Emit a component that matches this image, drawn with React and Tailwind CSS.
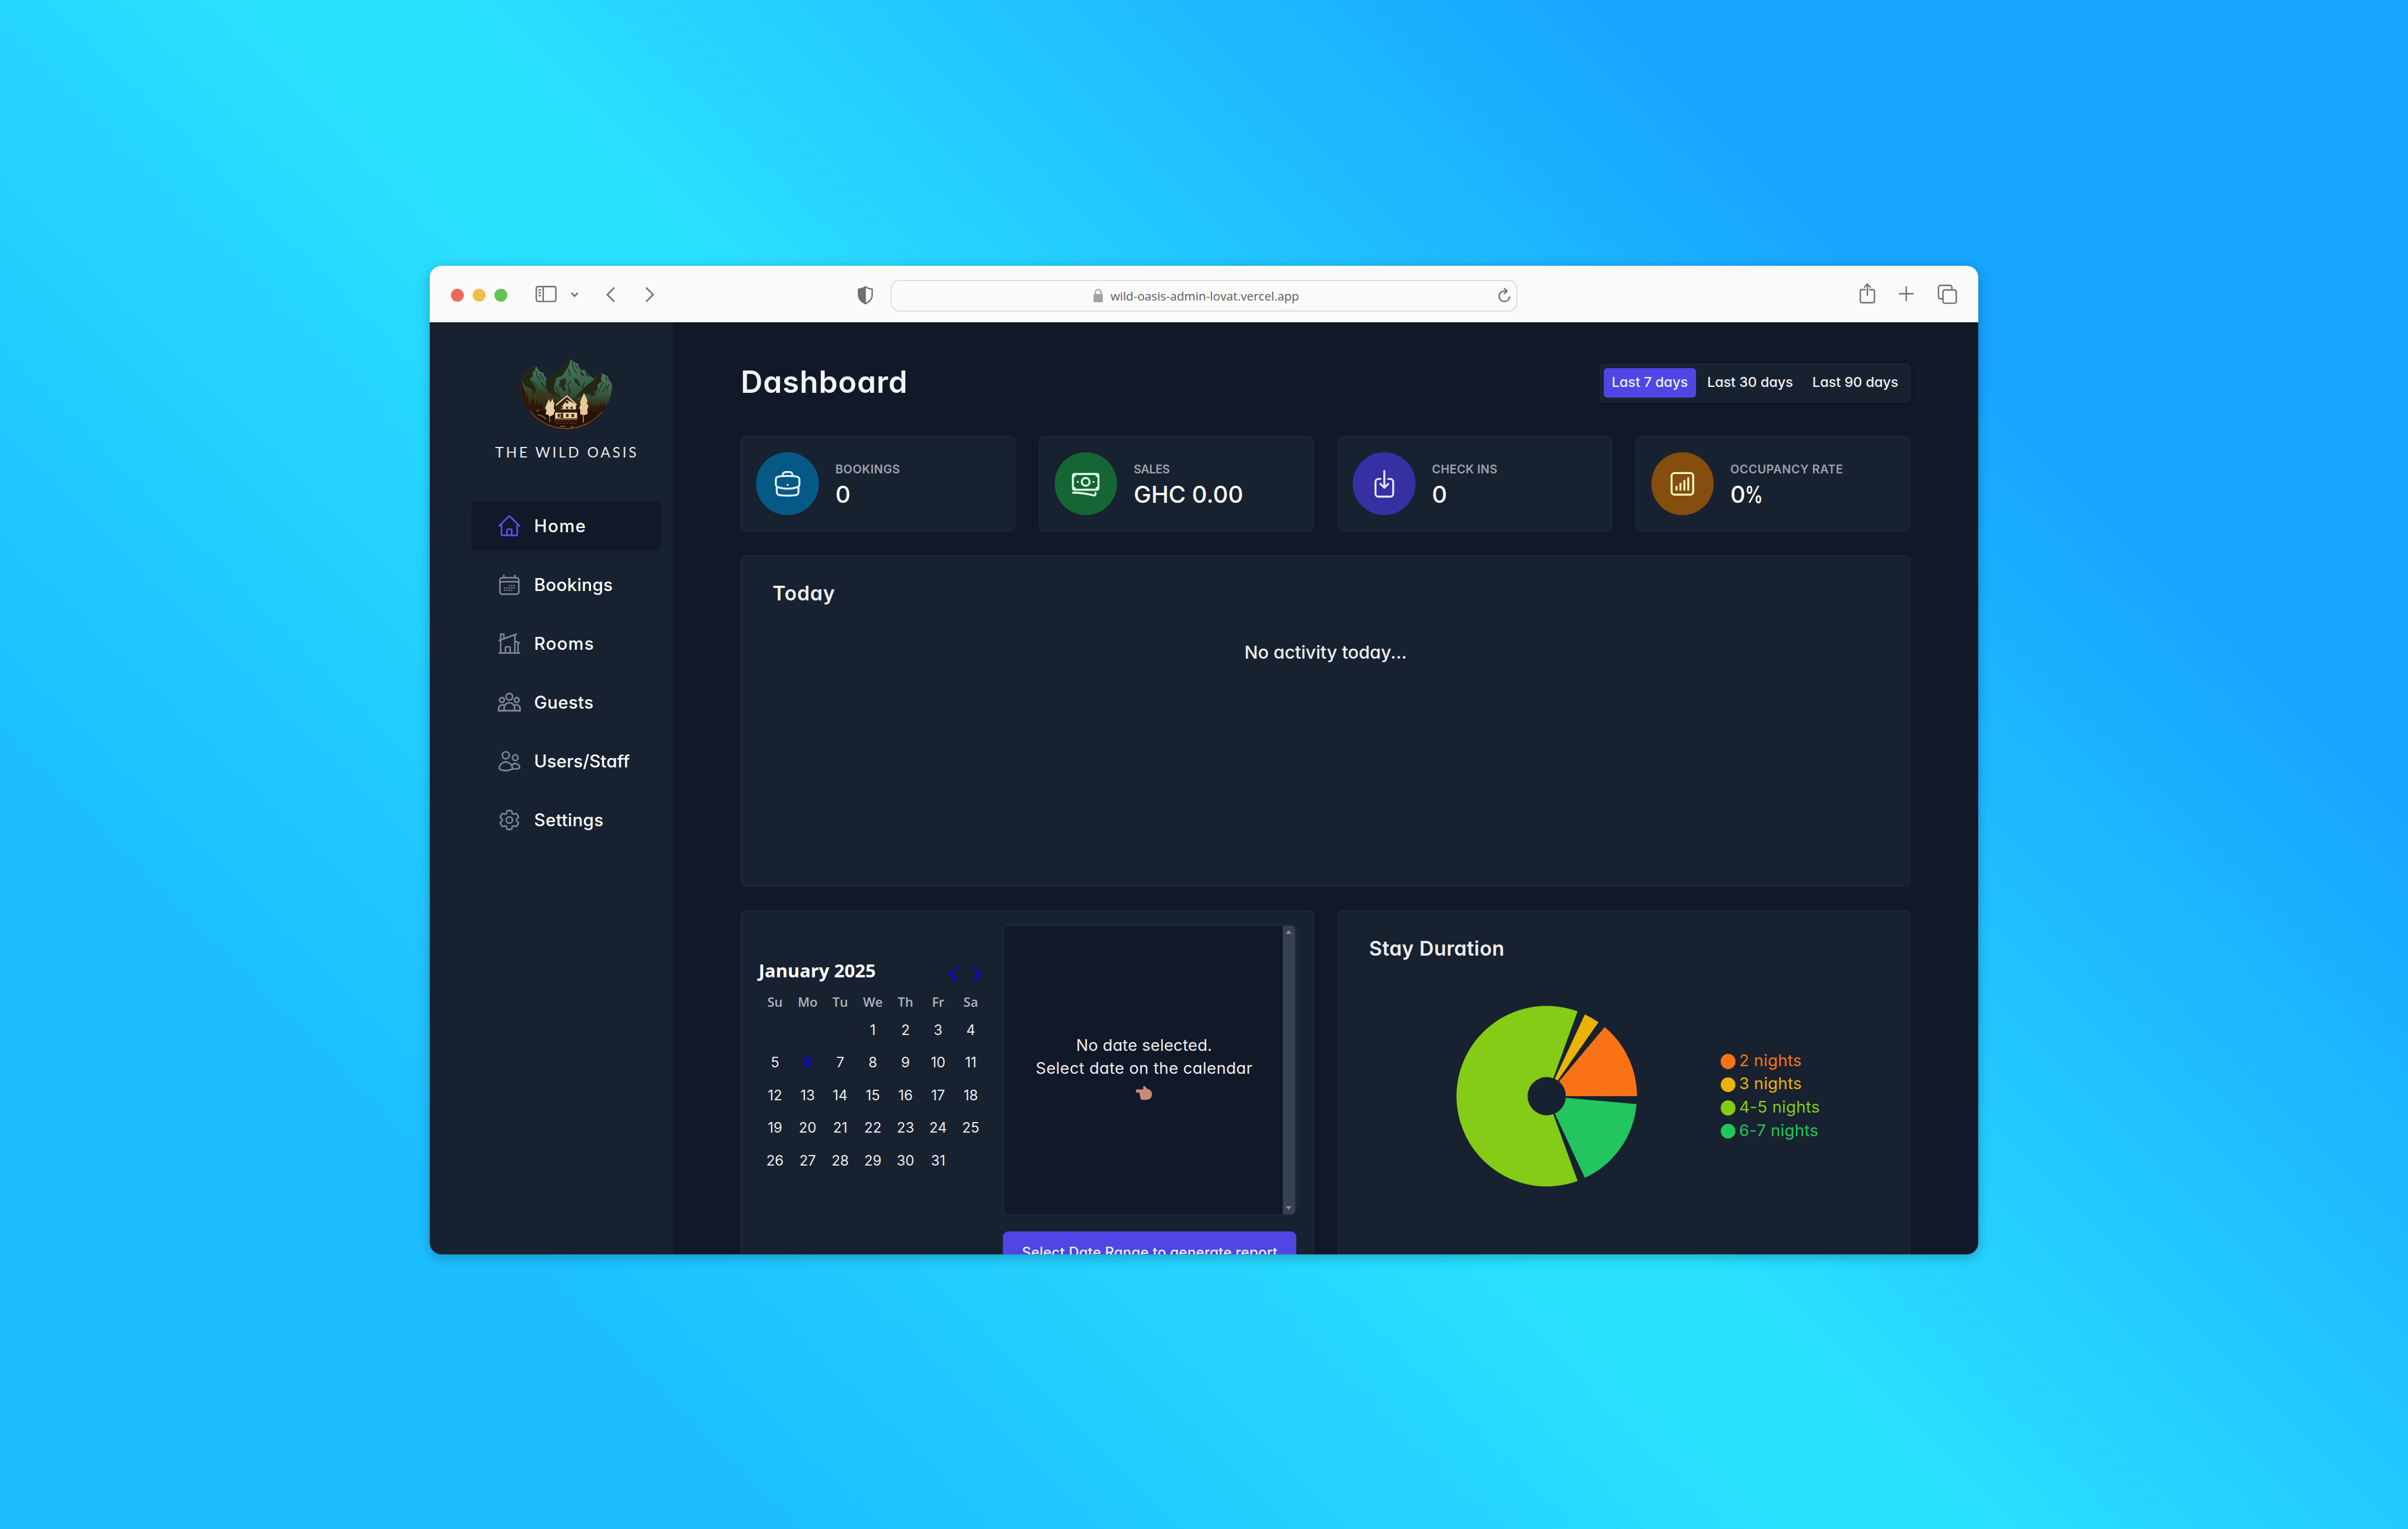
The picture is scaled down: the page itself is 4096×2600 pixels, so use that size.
import {
  HiOutlineHome,
  HiOutlineCalendarDays,
  HiOutlineHomeModern,
  HiOutlineUsers,
  HiOutlineCog6Tooth,
  HiOutlineBriefcase,
  HiOutlineBanknotes,
  HiOutlineArrowDownOnSquare,
  HiOutlineChartBarSquare,
} from "react-icons/hi2";

function GuestsIcon({ className }) {
  return (
    <svg viewBox="0 0 24 24" fill="none" stroke="currentColor" strokeWidth="1.6" className={className}>
      <circle cx="12" cy="6.6" r="3.1" />
      <circle cx="5" cy="9.7" r="2.25" />
      <circle cx="19" cy="9.7" r="2.25" />
      <path d="M7 19.9v-2.6a5 5 0 0 1 10 0v2.6" />
      <path d="M7.6 14.900a4 4 0 0 0-2.300-.500 3.500 3.500 0 0 0-3.500 3.500v2h20.400v-2a3.500 3.500 0 0 0-3.500-3.500 4 4 0 0 0-2.300.500" />
    </svg>
  );
}

const NAV = [
  { label: "Home", Icon: HiOutlineHome, active: true, track: "tracking-[1.4px]" },
  { label: "Bookings", Icon: HiOutlineCalendarDays, track: "tracking-[0.4px]" },
  { label: "Rooms", Icon: HiOutlineHomeModern, track: "tracking-[1.2px]" },
  { label: "Guests", Icon: GuestsIcon, track: "tracking-[0.4px]" },
  { label: "Users/Staff", Icon: HiOutlineUsers, track: "tracking-[0.1px]" },
  { label: "Settings", Icon: HiOutlineCog6Tooth, track: "tracking-[0.4px]" },
];

const STATS = [
  { title: "Bookings", value: "0", Icon: HiOutlineBriefcase, tone: "bg-[#075985] text-[#e0f2fe]", track: "tracking-[0.6px]" },
  { title: "Sales", value: "GHC 0.00", Icon: HiOutlineBanknotes, tone: "bg-[#166534] text-[#dcfce7]", track: "tracking-[-0.4px]" },
  { title: "Check ins", value: "0", Icon: HiOutlineArrowDownOnSquare, tone: "bg-[#3730a3] text-[#e0e7ff]", track: "tracking-[0.35px]" },
  { title: "Occupancy rate", value: "0", suffix: "%", Icon: HiOutlineChartBarSquare, tone: "bg-[#854d0e] text-[#fef9c3]", track: "tracking-[0.6px]" },
];

const WEEKDAYS = ["Su", "Mo", "Tu", "We", "Th", "Fr", "Sa"];
const DAYS = [null, null, null, ...Array.from({ length: 31 }, (_, i) => i + 1)];

const LEGEND = [
  { label: "2 nights", dot: "bg-[#f97316]", text: "text-[#f97316]" },
  { label: "3 nights", dot: "bg-[#eab308]", text: "text-[#eab308]" },
  { label: "4-5 nights", dot: "bg-[#84cc16]", text: "text-[#84cc16]" },
  { label: "6-7 nights", dot: "bg-[#22c55e]", text: "text-[#22c55e]" },
];

const SLICES = [
  { from: 0, to: 50, color: "#f97316" },
  { from: 55, to: 65, color: "#eab308" },
  { from: 70, to: 290, color: "#84cc16" },
  { from: 295, to: 355, color: "#22c55e" },
];

function slicePath({ from, to }) {
  const c = 154;
  const outer = 153.5;
  const inner = 32.5;
  const pt = (r, a) => {
    const rad = (a * Math.PI) / 180;
    return `${(c + r * Math.cos(rad)).toFixed(2)} ${(c - r * Math.sin(rad)).toFixed(2)}`;
  };
  const large = to - from > 180 ? 1 : 0;
  return `M${pt(outer, from)}A${outer} ${outer} 0 ${large} 0 ${pt(outer, to)}L${pt(inner, to)}A${inner} ${inner} 0 ${large} 1 ${pt(inner, from)}Z`;
}

function Logo() {
  return (
    <svg viewBox="38 42 802 616" className="h-[120px] w-[156.4px]">
      <defs>
        <clipPath id="disc">
          <circle cx="439" cy="254" r="401" />
        </clipPath>
        <linearGradient id="rock" x1="0" y1="0" x2="0" y2="1">
          <stop offset="0" stopColor="#4b7a60" />
          <stop offset="0.6" stopColor="#37604a" />
          <stop offset="1" stopColor="#2f4a33" />
        </linearGradient>
        <linearGradient id="ground" x1="0" y1="240" x2="0" y2="600" gradientUnits="userSpaceOnUse">
          <stop offset="0" stopColor="#3c4a2a" />
          <stop offset="0.45" stopColor="#37301a" />
          <stop offset="0.8" stopColor="#2b1708" />
          <stop offset="1" stopColor="#241105" />
        </linearGradient>
        <linearGradient id="fade" x1="0" y1="300" x2="0" y2="500" gradientUnits="userSpaceOnUse">
          <stop offset="0" stopColor="#3f4b2a" stopOpacity="0" />
          <stop offset="1" stopColor="#2d1a09" />
        </linearGradient>
      </defs>
      <g clipPath="url(#disc)">
        <path fill="url(#ground)" d="M36 235 95 150 268 215 682 212 740 160 842 262 842 660 36 660Z" />
        <path fill="url(#rock)" d="M46 226 95 150 130 118 160 102 180 108 200 140 218 155 238 158 248 185 268 215 275 330 200 300 120 320 70 270Z" />
        <path fill="#222613" d="M46 226 95 150 130 118 160 102 172 106 165 140 145 155 148 190 120 215 135 240 170 285 175 330 150 345 130 300 85 278Z" />
        <path fill="url(#rock)" d="M262 222 300 190 350 160 400 110 455 52 480 45 515 72 540 80 552 110 572 140 598 130 640 180 682 212 620 290 500 390 380 390 290 345 262 290Z" />
        <path fill="#222613" d="M262 222 300 190 350 160 400 110 455 52 478 46 462 95 440 130 405 185 350 205 338 260 330 300 345 330 380 350 395 385 330 365 285 335 262 290Z" />
        <path fill="#24301c" d="M385 225 430 205 440 245 425 275 438 315 410 320 400 290 375 285ZM505 205 535 215 565 265 552 278 520 250ZM560 140 600 185 585 190 560 160ZM600 135 645 195 620 190Z" />
        <path fill="none" stroke="#22321f" strokeWidth="8" d="M455 120 475 190M490 60 500 120 530 165M515 85 545 125M480 235 455 260 465 330M478 300 460 360M345 285 380 340M575 300 600 240" />
        <path fill="url(#rock)" d="M505 385 600 290 690 215 740 157 765 172 800 188 812 222 842 262 842 440 680 440 560 400Z" />
        <path fill="#222613" d="M500 390 600 285 690 215 738 157 752 170 742 210 748 235 710 262 715 300 690 330 700 350 655 370 640 345 610 350 560 375Z" />
        <path fill="none" stroke="#26351f" strokeWidth="9" d="M785 195 792 225M760 240 735 290M790 270 755 330M735 300 715 330M810 260 790 320" />
        <path fill="none" stroke="#26351f" strokeWidth="8" d="M175 140 185 190 215 220M205 165 240 220M135 225 190 285M215 240 262 300" />
        <path fill="url(#fade)" d="M36 300H842V660H36Z" />
        <path fill="#2f1607" d="M36 230 50 235 68 300 85 350 90 400 98 325 112 420 120 440 150 370 165 460 185 400 200 460 218 410 232 470 255 480 640 480 650 440 662 490 675 440 690 500 705 450 718 480 738 415 752 460 770 420 790 470 800 660 36 660Z" />
        <path fill="#221004" d="M36 500H842V660H36Z" opacity="0.7" />
      </g>
      <path fill="none" stroke="#7c4a22" strokeWidth="8" d="M122 492A401 401 0 0 0 748 502" />
      <path fill="none" stroke="#a4632f" strokeWidth="5" strokeDasharray="26 14" d="M250 598A401 401 0 0 0 630 598" />
      <path fill="none" stroke="#8f7045" strokeWidth="8" d="M190 525 235 540 262 565M178 492 200 486M385 628H430M475 635 500 628" />
      <path fill="#e6cfa0" d="M288 388 300 420 318 386 334 430 330 470 342 490 328 525 300 540 296 560 286 530 258 520 268 490 254 468 270 430Z" />
      <path stroke="#5b5f63" strokeWidth="12" d="M294 540V592" />
      <path fill="#e6c99a" d="M594 335 612 375 625 405 618 425 634 450 622 480 628 515 600 530 560 522 562 490 552 465 564 440 560 415 575 380Z" />
      <path stroke="#c69d69" strokeWidth="8" d="M588 525V594" />
      <path fill="#3a2310" d="M446 362 345 450 340 492 532 492 525 430Z" />
      <path fill="#e9d2a3" d="M446 395 400 455 392 480 524 480 522 436Z" />
      <path fill="none" stroke="#f0dcb2" strokeWidth="10" d="M348 442 446 362 530 440" />
      <path fill="#e9cf9c" d="M342 505H534V558H342Z" />
      <path fill="#2d1a0b" d="M350 482H526L542 506H330Z" />
      <path fill="#3d2d1c" d="M435 405h22v22h-22zM436 455h20v20h-20zM476 455h20v20h-20zM396 455h14v20h-14zM364 518h20v30h-20zM390 512h22v46h-22zM437 520h22v26h-22zM484 520h24v26h-24z" />
      <path fill="#8a6338" d="M338 556H536V570H338Z" />
      <path stroke="#553319" strokeWidth="10" strokeDasharray="18 12" d="M335 582H535M350 602H520" />
    </svg>
  );
}

function Toolbar() {
  return (
    <div className="flex h-[96px] shrink-0 items-start bg-[#fafafa] pl-[36px] text-[#726f6a]">
      <div className="mt-[39px] flex gap-[15.7px]">
        <span className="size-[21.5px] rounded-full bg-[#eb6a5e]" />
        <span className="size-[21.5px] rounded-full bg-[#f5bd4f]" />
        <span className="size-[21.5px] rounded-full bg-[#61c454]" />
      </div>
      <svg viewBox="0 0 36 28" className="mt-[33.5px] ml-[48.5px] h-[28px] w-[36px]" fill="none" stroke="currentColor" strokeWidth="2.4">
        <rect x="1.2" y="1.2" width="33.4" height="25.4" rx="3" />
        <path d="M13 1v26" />
        <path d="M5 7.2h4.2M5 12h4.2M5 16.7h4.2" />
      </svg>
      <svg viewBox="0 0 13 9" className="mt-[45px] ml-[23.5px] h-[9px] w-[13px]" fill="none" stroke="currentColor" strokeWidth="2.6">
        <path d="M1 1l5.4 5.6L11.8 1" />
      </svg>
      <svg viewBox="0 0 15 26" className="mt-[35.5px] ml-[47px] h-[26px] w-[15px]" fill="none" stroke="currentColor" strokeWidth="2.6">
        <path d="M14 1 2 13l12 12" />
      </svg>
      <svg viewBox="0 0 15 26" className="mt-[35.5px] ml-[52px] h-[26px] w-[15px]" fill="none" stroke="currentColor" strokeWidth="2.6">
        <path d="M1 1l12 12L1 25" />
      </svg>
      <svg viewBox="0 0 26 32" className="mt-[33.5px] ml-[346px] h-[32px] w-[26px]">
        <path fill="none" stroke="currentColor" strokeWidth="2.4" strokeLinejoin="round" d="M13 1.6c3.4 2.6 7 3.6 11.6 4V16c0 7-5 11-11.600 14.400C6.400 27 1.400 23 1.400 16V5.600C6 5.200 9.600 4.200 13 1.600Z" />
        <path fill="currentColor" d="M13.800 1v30C7 28 1 23 1 16V5.400C6 5 10 4 13.800 1Z" />
      </svg>
      <div className="mt-[23.5px] ml-[30px] flex h-[54px] w-[1066px] items-center rounded-[15px] border-[2.5px] border-[#e0dcd8]">
        <div className="flex flex-1 items-center pl-[343px]">
          <svg viewBox="0 0 16 23" className="h-[23px] w-[16px] text-[#a6a29f]">
            <rect y="9" width="16" height="14" rx="1.800" fill="currentColor" />
            <path d="M3.200 10V6.200a4.800 4.800 0 0 1 9.600 0V10" fill="none" stroke="currentColor" strokeWidth="2.300" />
          </svg>
          <span className="ml-[13px] font-['Open_Sans'] text-[20.700px] leading-[30px] text-[#5c5a58]">
            wild-oasis-admin-lovat.vercel.app
          </span>
        </div>
        <svg viewBox="0 0 20 25" className="mr-[10px] mb-[3px] h-[25px] w-[20px]" fill="none" stroke="currentColor" strokeWidth="2.400">
          <path d="M18.800 15A8.900 8.900 0 1 1 10 6h4.500" />
          <path d="M9.500 1l5 5-5 5" />
        </svg>
      </div>
      <svg viewBox="0 0 27 35" className="mt-[28.500px] ml-[582px] h-[35px] w-[27px]" fill="none" stroke="currentColor" strokeWidth="2.400">
        <path d="M10.500 11.500H4a2.600 2.600 0 0 0-2.600 2.600v17a2.600 2.600 0 0 0 2.600 2.600h18.800a2.600 2.600 0 0 0 2.600-2.600v-17a2.600 2.600 0 0 0-2.600-2.600h-6.500" />
        <path d="M13.400 22.500V2M7.800 8l5.600-6 5.600 6" />
      </svg>
      <svg viewBox="0 0 25 25" className="mt-[35px] ml-[40.500px] size-[25px]" fill="none" stroke="currentColor" strokeWidth="2.400">
        <path d="M12.500 0v25M0 12.500h25" />
      </svg>
      <svg viewBox="0 0 33 33" className="mt-[31.500px] ml-[41px] size-[33px]" fill="none" stroke="currentColor" strokeWidth="2.400">
        <path d="M8.500 24H4.500a3.200 3.200 0 0 1-3.200-3.200V4.500a3.200 3.200 0 0 1 3.200-3.200H21a3.200 3.200 0 0 1 3.200 3.200v4" />
        <rect x="9" y="9" width="22.600" height="22.600" rx="3.200" />
      </svg>
    </div>
  );
}

function Sidebar() {
  return (
    <aside className="flex w-[413.700px] shrink-0 flex-col items-stretch bg-[#18212f] pr-[21px] pl-[71px]">
      <div className="mt-[63px] flex justify-center">
        <Logo />
      </div>
      <div className="mt-[19.500px] pl-[3px] text-center font-[Lato] text-[24.500px] leading-[36px] tracking-[3.700px] whitespace-nowrap text-[#e5e7eb]">
        THE WILD OASIS
      </div>
      <nav className="mt-[65.500px] flex flex-col gap-[14.650px]">
        {NAV.map(({ label, Icon, active, track }) => (
          <a
            key={label}
            className={`flex h-[85.400px] items-center gap-[20.800px] rounded-[9px] pl-[43px] ${active ? "bg-[#111827]" : ""}`}
          >
            <Icon className={`size-[42.800px] ${active ? "text-[#5b4ff5]" : "text-[#7d8594]"}`} />
            <span className={`pb-[2px] text-[29.500px] font-medium text-white ${track}`}>{label}</span>
          </a>
        ))}
      </nav>
    </aside>
  );
}

function StatCard({ title, value, suffix, Icon, tone, track }) {
  return (
    <div className="flex h-[163.500px] items-center gap-[28px] rounded-[9px] border-2 border-[#1c2635] bg-[#18212f] pl-[24.500px]">
      <div className={`flex size-[106.500px] items-center justify-center rounded-full ${tone}`}>
        <Icon className="size-[53.500px]" />
      </div>
      <div className="pt-[2px]">
        <h5 className={`text-[19.800px] leading-[28px] font-semibold text-[#9ca3af] uppercase ${track}`}>{title}</h5>
        <p className="mt-[7px] text-[39.800px] leading-[43px] font-medium text-white">
          {value}
          {suffix && <span className="-ml-[1px] inline-block origin-left scale-x-[0.78]">{suffix}</span>}
        </p>
      </div>
    </div>
  );
}

function Calendar() {
  return (
    <div className="w-[388.500px] pt-[70px]">
      <div className="flex h-[62px] justify-between pr-[9px]">
        <span className="font-['Open_Sans'] text-[31px] leading-[61px] font-bold whitespace-nowrap text-white">January 2025</span>
        <div className="flex items-center gap-[25px] pt-[12px]">
          <svg viewBox="0 0 16 25" className="h-[25px] w-[16px]" fill="none" stroke="#0000ff" strokeWidth="3.300">
            <path d="M14.800 1.500 2.600 12.500l12.200 11" />
          </svg>
          <svg viewBox="0 0 16 25" className="h-[25px] w-[16px]" fill="none" stroke="#0000ff" strokeWidth="3.300">
            <path d="M1.200 1.500l12.200 11-12.200 11" />
          </svg>
        </div>
      </div>
      <div className="grid grid-cols-7 text-center font-['Open_Sans'] text-[22px] leading-[42px] font-semibold text-[#b0b4bc]">
        {WEEKDAYS.map((d) => (
          <span key={d}>{d}</span>
        ))}
      </div>
      <div className="grid grid-cols-7 text-center text-[24px] leading-[55.500px] text-[#e9ebee]">
        {DAYS.map((d, i) => (
          <span key={i} className={d === 6 ? "text-[#0000ff]" : ""}>
            {d}
          </span>
        ))}
      </div>
    </div>
  );
}

function ActivityPicker() {
  return (
    <div className="ml-[27.500px] flex w-[498.500px] flex-col pt-[22px]">
      <div className="flex h-[495.500px] overflow-hidden rounded-[9px] border-2 border-[#1f2937] bg-[#111827]">
        <div className="flex flex-1 flex-col items-center justify-center pb-[5px] pl-[2px] text-[27.300px] leading-[39.600px] text-[#eceef1]">
          <p className="tracking-[0.200px]">No date selected.</p>
          <p className="tracking-[0.430px]">Select date on the calendar</p>
          <p className="flex h-[39.600px] items-center pt-[4px]">
            <svg viewBox="0 0 78 65" className="h-[25px] w-[28px]">
              <path
                fill="#c68c78"
                d="M5 16h27c4-2 5-5 3-9-1-4 1-7 5-7 4 0 6 4 9 8 3 3 6 5 12 7 10 4 16 12 16 24 0 14-8 24-24 26H30c-5 0-7-3-8-8l-5-26H6c-8 0-8-14-1-15Z"
              />
            </svg>
          </p>
        </div>
        <div className="flex w-[21px] flex-col items-center justify-between bg-[#374151] py-[8px]">
          <svg viewBox="0 0 10 6" className="h-[6px] w-[10px]">
            <path d="M0 6 5 0l5 6Z" fill="#8a919c" />
          </svg>
          <svg viewBox="0 0 10 6" className="h-[6px] w-[10px]">
            <path d="M0 0h10L5 6Z" fill="#8a919c" />
          </svg>
        </div>
      </div>
      <button className="mt-[27px] h-[73.500px] rounded-[9px] bg-[#4f46e5] pb-[2px] text-[24px] font-medium tracking-[0.220px] whitespace-nowrap text-[#eef2ff]">
        Select Date Range to generate report
      </button>
    </div>
  );
}

function StayDuration() {
  return (
    <div className="h-[700px] flex-1 rounded-[9px] border-2 border-[#1c2635] bg-[#18212f] pt-[38px]">
      <h2 className="pl-[52px] text-[34px] leading-[50px] font-semibold tracking-[0.400px] text-[#eceef1]">Stay Duration</h2>
      <div className="mt-[72.500px] flex items-center pl-[200.500px]">
        <svg viewBox="0 0 308 308" className="size-[308px]">
          {SLICES.map((s) => (
            <path key={s.color} d={slicePath(s)} fill={s.color} />
          ))}
        </svg>
        <ul className="ml-[141.500px]">
          {LEGEND.map(({ label, dot, text }) => (
            <li key={label} className="flex h-[39.600px] items-center gap-[6px]">
              <span className={`size-[25.500px] rounded-full ${dot}`} />
              <span className={`pb-[4px] text-[27.700px] leading-[36px] tracking-[0.250px] whitespace-nowrap ${text}`}>{label}</span>
            </li>
          ))}
        </ul>
      </div>
    </div>
  );
}

export default function App() {
  return (
    <div className="h-[2600px] w-[4096px] overflow-hidden bg-[linear-gradient(45deg,#1cbcff_0%,#1cbeff_20%,#2ae0ff_46%,#2ae0ff_50%,#17a4ff_80%,#17a4ff_100%)] pt-[452px] pl-[731px]">
      <div className="flex h-[1681px] w-[2634px] flex-col overflow-hidden rounded-[20px] font-[Inter] shadow-[0_5px_20px_rgba(0,0,0,0.25)] [font-feature-settings:'cv11']">
        <Toolbar />
        <div className="flex min-h-0 flex-1">
          <Sidebar />
          <main className="min-w-0 flex-1 overflow-hidden bg-[#111827] px-[115.300px] pt-[69.700px]">
            <header className="flex h-[67px] items-center justify-between">
              <h1 className="pb-[4px] text-[51.500px] leading-[60px] font-semibold tracking-[0.900px] text-[#f3f4f6]">Dashboard</h1>
              <div className="flex h-[67px] w-[529px] items-center justify-between rounded-[6px] border-2 border-[#1c2635] bg-[#18212f] px-[5.300px] text-[23.500px] font-medium whitespace-nowrap text-[#f0f1f4] shadow-[0_2px_4px_rgba(0,0,0,0.4)]">
                <button className="h-[50px] w-[156.500px] rounded-[6px] bg-[#4f46e5] pb-[4px] text-[#eef2ff]">Last 7 days</button>
                <button className="h-[50px] w-[172px] pb-[4px]">Last 30 days</button>
                <button className="h-[50px] w-[173px] pb-[4px]">Last 90 days</button>
              </div>
            </header>
            <div className="mt-[56px] grid grid-cols-4 gap-[40px]">
              {STATS.map((s) => (
                <StatCard key={s.title} {...s} />
              ))}
            </div>
            <section className="mt-[40px] h-[563.500px] rounded-[9px] border-2 border-[#1c2635] bg-[#18212f] pt-[38px]">
              <h2 className="pl-[52px] text-[34px] leading-[50px] font-semibold tracking-[0.800px] text-[#eceef1]">Today</h2>
              <p className="mt-[51.500px] text-center text-[30.500px] leading-[46px] font-medium text-[#eceef1]">
                No activity today...
              </p>
            </section>
            <div className="mt-[40px] flex gap-[40px]">
              <div className="flex h-[700px] w-[974.700px] rounded-[9px] border-2 border-[#1f2937] bg-[#18212f] pl-[28.500px]">
                <Calendar />
                <ActivityPicker />
              </div>
              <StayDuration />
            </div>
          </main>
        </div>
      </div>
    </div>
  );
}
